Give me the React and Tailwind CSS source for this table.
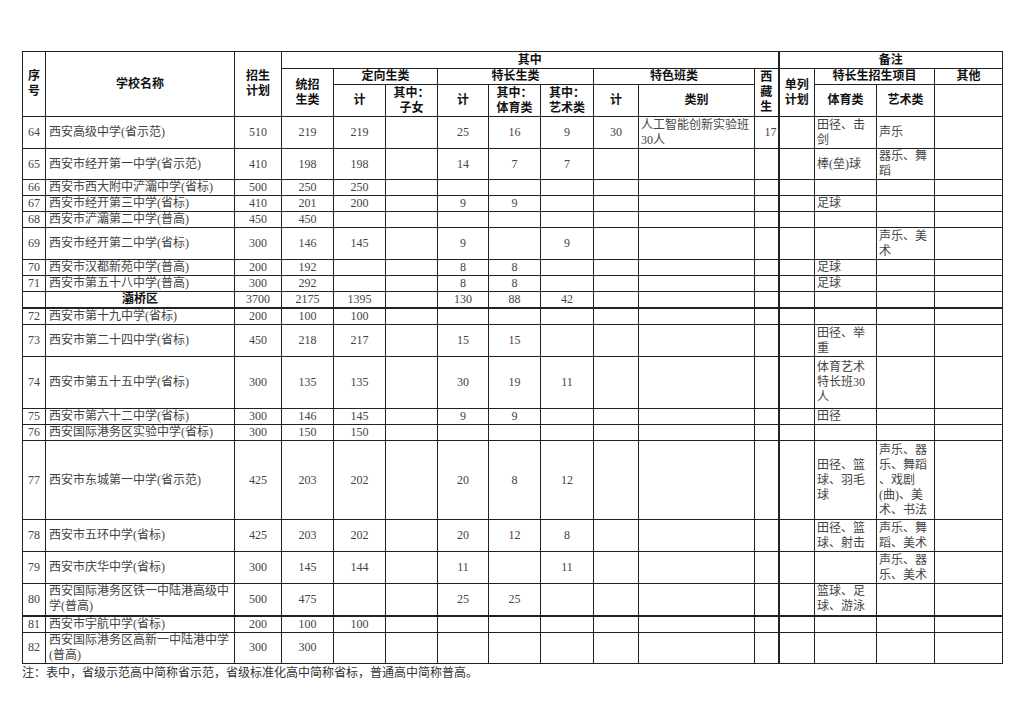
const FONT = "font-['Liberation_Serif','Noto_Sans_CJK_SC',serif]";

const widths = [
  'w-[23px]', 'w-[189px]', 'w-[47px]', 'w-[52px]', 'w-[52px]', 'w-[52px]', 'w-[51px]', 'w-[52px]',
  'w-[53px]', 'w-[45px]', 'w-[116px]', 'w-[24px]', 'w-[36px]', 'w-[62px]', 'w-[58px]', 'w-[68px]',
];

// 每列默认对齐
const align = [
  'text-center', 'text-left pl-[3px]', 'text-center', 'text-center', 'text-center', 'text-center',
  'text-center', 'text-center', 'text-center', 'text-center', 'text-left pl-[2px]', 'text-right pr-[1px]',
  'text-center', 'text-left pl-[2px]', 'text-left pl-[2px]', 'text-left',
];

const rows = [
  { h: 'h-[32px]', c: ['64', '西安高级中学(省示范)', '510', '219', '219', '', '25', '16', '9', '30', '人工智能创新实验班/30人', '17', '', '田径、击/剑', '声乐', ''] },
  { h: 'h-[31px]', c: ['65', '西安市经开第一中学(省示范)', '410', '198', '198', '', '14', '7', '7', '', '', '', '', '棒(垒)球', '器乐、舞/蹈', ''] },
  { h: 'h-[16px]', c: ['66', '西安市西大附中浐灞中学(省标)', '500', '250', '250', '', '', '', '', '', '', '', '', '', '', ''] },
  { h: 'h-[16px]', c: ['67', '西安市经开第三中学(省标)', '410', '201', '200', '', '9', '9', '', '', '', '', '', '足球', '', ''] },
  { h: 'h-[16px]', c: ['68', '西安市浐灞第二中学(普高)', '450', '450', '', '', '', '', '', '', '', '', '', '', '', ''] },
  { h: 'h-[32px]', c: ['69', '西安市经开第二中学(省标)', '300', '146', '145', '', '9', '', '9', '', '', '', '', '', '声乐、美/术', ''] },
  { h: 'h-[16px]', c: ['70', '西安市汉都新苑中学(普高)', '200', '192', '', '', '8', '8', '', '', '', '', '', '足球', '', ''] },
  { h: 'h-[16px]', c: ['71', '西安市第五十八中学(普高)', '300', '292', '', '', '8', '8', '', '', '', '', '', '足球', '', ''] },
  { h: 'h-[16px]', bold: true, c: ['', '灞桥区', '3700', '2175', '1395', '', '130', '88', '42', '', '', '', '', '', '', ''] },
  { h: 'h-[15px]', thick: true, c: ['72', '西安市第十九中学(省标)', '200', '100', '100', '', '', '', '', '', '', '', '', '', '', ''] },
  { h: 'h-[32px]', c: ['73', '西安市第二十四中学(省标)', '450', '218', '217', '', '15', '15', '', '', '', '', '', '田径、举/重', '', ''] },
  { h: 'h-[52px]', c: ['74', '西安市第五十五中学(省标)', '300', '135', '135', '', '30', '19', '11', '', '', '', '', '体育艺术/特长班30/人', '', ''] },
  { h: 'h-[16px]', c: ['75', '西安市第六十二中学(省标)', '300', '146', '145', '', '9', '9', '', '', '', '', '', '田径', '', ''] },
  { h: 'h-[15px]', c: ['76', '西安国际港务区实验中学(省标)', '300', '150', '150', '', '', '', '', '', '', '', '', '', '', ''] },
  { h: 'h-[79px]', c: ['77', '西安市东城第一中学(省示范)', '425', '203', '202', '', '20', '8', '12', '', '', '', '', '田径、篮/球、羽毛/球', '声乐、器/乐、舞蹈/、戏剧/(曲)、美/术、书法', ''] },
  { h: 'h-[32px]', c: ['78', '西安市五环中学(省标)', '425', '203', '202', '', '20', '12', '8', '', '', '', '', '田径、篮/球、射击', '声乐、舞/蹈、美术', ''] },
  { h: 'h-[32px]', c: ['79', '西安市庆华中学(省标)', '300', '145', '144', '', '11', '', '11', '', '', '', '', '', '声乐、器/乐、美术', ''] },
  { h: 'h-[32px]', c: ['80', '西安国际港务区铁一中陆港高级中/学(普高)', '500', '475', '', '', '25', '25', '', '', '', '', '', '篮球、足/球、游泳', '', ''] },
  { h: 'h-[14px]', thick: true, c: ['81', '西安市宇航中学(省标)', '200', '100', '100', '', '', '', '', '', '', '', '', '', '', ''] },
  { h: 'h-[31px]', c: ['82', '西安国际港务区高新一中陆港中学/(普高)', '300', '300', '', '', '', '', '', '', '', '', '', '', '', ''] },
];

function Lines({ text }) {
  const parts = text.split('/');
  return parts.map((p, i) => (
    <span key={i}>
      {p}
      {i < parts.length - 1 && <br />}
    </span>
  ));
}

const th = 'border border-[#222] font-bold text-[#111] align-middle text-center p-0';

export default function App() {
  return (
    <div className={`bg-white min-h-screen pt-[51px] pl-[22px] ${FONT} text-[12px] leading-[15px]`}>
      <table className="table-fixed border-collapse w-[980px] text-[#444]">
        <colgroup>
          {widths.map((w, i) => (
            <col key={i} className={w} />
          ))}
        </colgroup>
        <thead>
          <tr className="h-[17px]">
            <th rowSpan={3} className={th}>序<br />号</th>
            <th rowSpan={3} className={th}>学校名称</th>
            <th rowSpan={3} className={th}>招生<br />计划</th>
            <th colSpan={9} className={th}>其中</th>
            <th colSpan={4} className={`${th} border-l-2`}>备注</th>
          </tr>
          <tr className="h-[15px]">
            <th rowSpan={2} className={th}>统招<br />生类</th>
            <th colSpan={2} className={th}>定向生类</th>
            <th colSpan={3} className={th}>特长生类</th>
            <th colSpan={2} className={th}>特色班类</th>
            <th rowSpan={2} className={th}>西<br />藏<br />生</th>
            <th rowSpan={2} className={`${th} border-l-2`}>单列<br />计划</th>
            <th colSpan={2} className={th}>特长生招生项目</th>
            <th className={th}>其他</th>
          </tr>
          <tr className="h-[32px]">
            <th className={th}>计</th>
            <th className={th}>其中：<br />子女</th>
            <th className={th}>计</th>
            <th className={th}>其中：<br />体育类</th>
            <th className={th}>其中：<br />艺术类</th>
            <th className={th}>计</th>
            <th className={th}>类别</th>
            <th className={th}>体育类</th>
            <th className={th}>艺术类</th>
            <th className={th}></th>
          </tr>
        </thead>
        <tbody>
          {rows.map((r, ri) => (
            <tr key={ri} className={r.h}>
              {r.c.map((v, ci) => {
                let cls = `border border-[#222] align-middle p-0 ${align[ci]}`;
                if (r.bold && ci === 1) cls = 'border border-[#222] align-middle p-0 text-center font-bold text-[#111]';
                if (r.thick) cls += ' border-t-2';
                if (ci === 12) cls += ' border-l-2';
                return (
                  <td key={ci} className={cls}>
                    <Lines text={v} />
                  </td>
                );
              })}
            </tr>
          ))}
        </tbody>
      </table>
      <p className="mt-[2px] text-[#333]">注：表中，省级示范高中简称省示范，省级标准化高中简称省标，普通高中简称普高。</p>
    </div>
  );
}
